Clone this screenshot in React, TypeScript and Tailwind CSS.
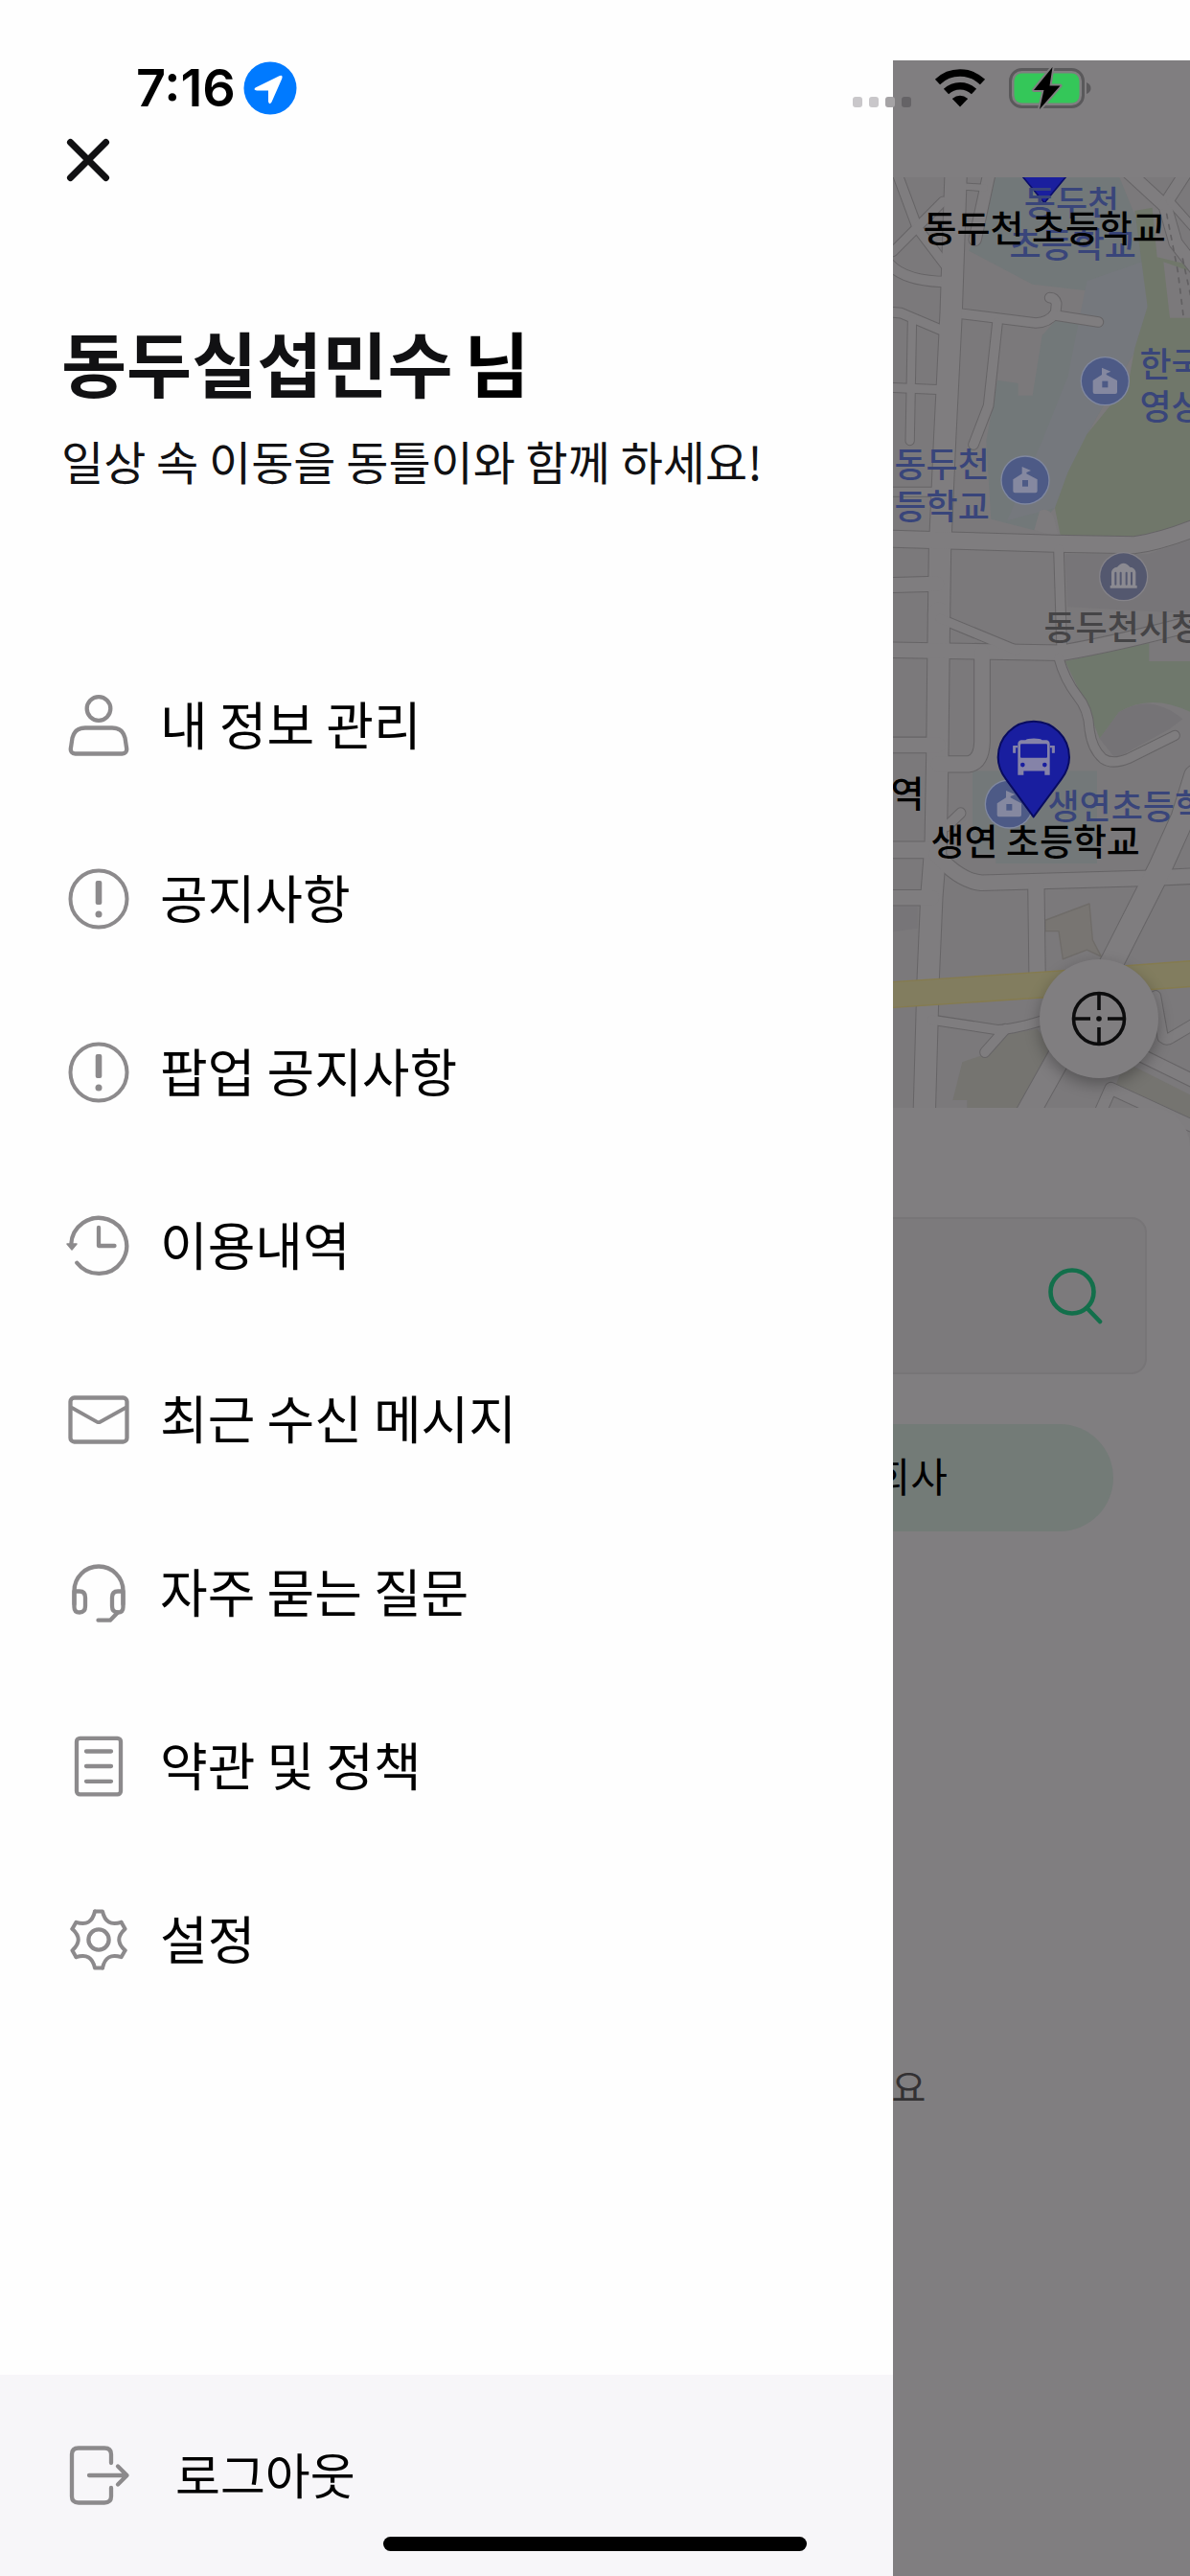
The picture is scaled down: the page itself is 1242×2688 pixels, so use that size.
import type { ReactNode } from 'react';
import { clsx } from 'clsx';

const iconProps = {
  viewBox: '0 0 64 64',
  fill: 'none',
  stroke: '#8c8a8c',
  strokeWidth: 4.3,
  strokeLinecap: 'round' as const,
  strokeLinejoin: 'round' as const,
  className: 'w-16 h-16 shrink-0 overflow-visible',
  'aria-hidden': true,
};

function UserIcon() {
  return (
    <svg {...iconProps}>
      <circle cx="32" cy="14.5" r="12.3" />
      <path d="M18 34.5H46C54 34.5 58 39 59.5 45L61 55C62 59.5 59.5 61.5 56.5 61.5H7.5C4.5 61.5 2 59.5 3 55L4.5 45C6 39 10 34.5 18 34.5Z" />
    </svg>
  );
}

function NoticeIcon() {
  return (
    <svg {...iconProps}>
      <circle cx="32" cy="32" r="29.5" strokeWidth="4" />
      <rect x="28.7" y="13" width="6.6" height="25" rx="2" fill="#8c8a8c" stroke="none" />
      <circle cx="32" cy="48" r="3.5" fill="#8c8a8c" stroke="none" />
    </svg>
  );
}

function HistoryIcon() {
  return (
    <svg {...iconProps}>
      <path d="M9.3 49.7A29 29 0 1 0 3.2 31" />
      <path d="M-1 30H9L4 36Z" fill="#8c8a8c" strokeWidth="1.5" />
      <path d="M32 13V32H48.5" />
    </svg>
  );
}

function MailIcon() {
  return (
    <svg {...iconProps}>
      <rect x="2.5" y="9.5" width="59" height="46" rx="4" />
      <path d="M4 20L30.5 34.8Q32 35.6 33.5 34.8L60 20" strokeWidth="3.8" />
    </svg>
  );
}

function HeadsetIcon() {
  return (
    <svg {...iconProps}>
      <path d="M6.5 44V30A25.5 25.5 0 0 1 57.5 30V44" />
      <path d="M6.5 30.5H12Q18 30.5 18 37V46Q18 52.5 12 52.5Q6.5 52.5 6.5 47Z" />
      <path d="M57.5 30.5H52Q46 30.5 46 37V46Q46 52.5 52 52.5Q57.5 52.5 57.5 47Z" />
      <path d="M52 52.5L44 60.7H31.5" />
    </svg>
  );
}

function DocumentIcon() {
  return (
    <svg {...iconProps}>
      <rect x="9" y="2.8" width="46" height="58.6" rx="3.5" />
      <path d="M19 16.5H45M19 32H45M19 47.8H45" />
    </svg>
  );
}

function GearIcon() {
  return (
    <svg {...iconProps} strokeWidth="4">
      <circle cx="32" cy="32" r="10.6" strokeWidth="4.3" />
      {[0, 60, 120, 180, 240, 300].map((angle) => (
        <path
          key={angle}
          d="M28 2.5H36C38.5 13.5 44.5 17.2 55.5 13.8"
          transform={`rotate(${angle} 32 32)`}
        />
      ))}
    </svg>
  );
}

function LogoutIcon() {
  return (
    <svg {...iconProps}>
      <path d="M45 19V10Q45 3.5 38 3.5H11Q4 3.5 4 10V54Q4 60.5 11 60.5H38Q45 60.5 45 54V45" />
      <path d="M22 32H61M52 22.5L61.5 32L52 41.5" />
    </svg>
  );
}

const menuItems = [
  { label: '내 정보 관리', icon: <UserIcon /> },
  { label: '공지사항', icon: <NoticeIcon /> },
  { label: '팝업 공지사항', icon: <NoticeIcon /> },
  { label: '이용내역', icon: <HistoryIcon /> },
  { label: '최근 수신 메시지', icon: <MailIcon /> },
  { label: '자주 묻는 질문', icon: <HeadsetIcon /> },
  { label: '약관 및 정책', icon: <DocumentIcon /> },
  { label: '설정', icon: <GearIcon /> },
];

function StatusBar() {
  return (
    <div className="absolute inset-x-0 top-[63px] z-10 h-[58px] pl-[142px] pr-[103px] flex items-center">
      <span className="font-['Inter',sans-serif] text-[54px] leading-[58px] font-semibold text-black">7:16</span>
      <svg viewBox="0 0 56 56" className="ml-2 w-14 h-14" aria-hidden="true">
        <circle cx="28" cy="28" r="27.5" fill="#007aff" />
        <path d="M12.5 27.5L37.5 15.2Q41.5 13.8 40.3 18L29.5 42.5Q27 46 26 42V30.5H14Q10 29.8 12.5 27.5Z" fill="#fff" />
      </svg>
      <div className="ml-auto flex gap-[7px] mt-7">
        <span className="w-[10px] h-[11px] rounded-[3px] bg-[#c9c7ca]" />
        <span className="w-[10px] h-[11px] rounded-[3px] bg-[#c9c7ca]" />
        <span className="w-[10px] h-[11px] rounded-[3px] bg-[#a5a3a5]" />
        <span className="w-[10px] h-[11px] rounded-[3px] bg-[#656366]" />
      </div>
      <svg viewBox="0 0 54 40" className="ml-6 w-[54px] h-10" aria-hidden="true">
        <path d="M3.5 13.5A34 34 0 0 1 50.5 13.5" fill="none" stroke="#000" strokeWidth="7.5" />
        <path d="M12.5 23.5A21 21 0 0 1 41.5 23.5" fill="none" stroke="#000" strokeWidth="7.5" />
        <path d="M27 39.5L18.8 31Q27 24.5 35.2 31Z" />
      </svg>
      <svg viewBox="0 0 86 44" className="ml-6 w-[86px] h-11" aria-hidden="true">
        <rect x="1.5" y="2.5" width="76" height="39" rx="12" fill="none" stroke="#5a595b" strokeWidth="3" />
        <rect x="5.5" y="6.5" width="68" height="31" rx="8" fill="#34c759" />
        <path d="M81 16Q85.5 18 85.5 22T81 28Z" fill="#5a595b" />
        <path d="M45.5 0L26 24H36.5L32 44L53.5 19.5H42.5Z" fill="#000" stroke="#807e80" strokeWidth="4" paintOrder="stroke" strokeLinejoin="round" />
      </svg>
    </div>
  );
}

const northRoads = [
  { d: 'M105 60L170 235L265 360', w: 32 },
  { d: 'M93 308L250 150', w: 30 },
  { d: 'M80 345Q130 402 265 402', w: 34 },
  { d: 'M80 496L118 500L260 560', w: 32 },
  { d: 'M153 520L146 900', w: 28 },
  { d: 'M80 733L250 740', w: 30 },
  { d: 'M80 1060L230 1060', w: 30 },
  { d: 'M395 60L350 270', w: 40 },
  { d: 'M290 102L380 108', w: 22 },
  { d: 'M290 500L540 531Q580 530 602 500L605 470Q600 452 584 452', w: 32 },
  { d: 'M596 506L736 528', w: 32 },
  { d: 'M420 530L392 790L345 912', w: 32 },
  { d: 'M820 50L945 165L978 280L1040 360', w: 42 },
  { d: 'M1010 60L945 160', w: 40 },
  { d: 'M960 150L1040 240', w: 26 },
  { d: 'M290 60L275 500L255 900L240 1240L237 1450', w: 70 },
  { d: 'M80 1206L240 1211L600 1222L850 1226Q930 1215 1040 1172', w: 54 },
  { d: 'M612 1240L622 1560', w: 32 },
  { d: 'M80 1352L230 1348', w: 48 },
];

const southRoads = [
  { d: 'M237 1440L235 1600L232 1870L227 2140L214 2300L203 2550L187 3100', w: 70 },
  { d: 'M80 1551L400 1556L620 1560Q800 1530 1040 1468', w: 48 },
  { d: 'M240 1456L480 1552', w: 30 },
  { d: 'M80 1839H235', w: 48 },
  { d: 'M80 2157H230', w: 52 },
  { d: 'M80 2302H215', w: 48 },
  { d: 'M235 1897H330Q370 1890 372 1830L372 1560', w: 50 },
  { d: 'M262 2085L305 2045', w: 32 },
  { d: 'M612 1575Q630 1640 670 1690Q705 1730 708 1790Q715 1850 750 1880Q780 1900 830 1880L976 1810', w: 30 },
  { d: 'M228 2170Q300 2250 370 2257L900 2242L1040 2236', w: 48 },
  { d: 'M1040 1935L1000 2060L930 2210L783 2490L500 2980', w: 74 },
  { d: 'M541 2260L545 2560', w: 52 },
  { d: 'M215 2672L420 2702Q480 2700 580 2668', w: 30 },
  { d: 'M445 2700L381 2770', w: 32 },
  { d: 'M915 2600L938 2725Q950 2735 965 2725L1040 2682', w: 34 },
  { d: 'M850 2770L1040 2860', w: 40 },
  { d: 'M720 3000L775 2880L1040 2998', w: 38 },
];

const southGrid = 'matrix(1 0 0 1.033 0 -47.5)';

function RoadLayer({ color, grow }: { color: string; grow: number }) {
  return (
    <g fill="none" stroke={color}>
      {northRoads.map((road) => (
        <path key={road.d} d={road.d} strokeWidth={road.w + grow} />
      ))}
      <g transform={southGrid}>
        {southRoads.map((road) => (
          <path key={road.d} d={road.d} strokeWidth={road.w + grow} />
        ))}
      </g>
    </g>
  );
}

function SchoolMarker({ x, y }: { x: number; y: number }) {
  return (
    <g transform={`translate(${x} ${y})`}>
      <circle r="77" fill="#8088a0" />
      <circle r="73" fill="#4d5a86" />
      <path d="M-38-2L-10-20V-42L18-30L4-24V-20L38-2V34Q38 40 32 40H-32Q-38 40-38 34Z" fill="#8588a0" />
      <rect x="-9" y="0" width="18" height="20" fill="#4d5a86" />
    </g>
  );
}

function MapDrawing() {
  return (
    <svg
      viewBox="93 75 933 3060"
      preserveAspectRatio="xMinYMin slice"
      className="absolute inset-0 w-full h-full"
      strokeLinecap="round"
      strokeLinejoin="round"
      aria-hidden="true"
    >
      <rect x="93" y="75" width="3000" height="3200" fill="#7b797b" />
      {/* campus, park and block areas */}
      <path d="M415 70H800L845 180L900 330L890 480L850 620L700 880L600 1110L535 1180L400 1145L385 900L420 710L485 720V758H530L560 570L605 520H700V430L530 410L330 305L350 270Z" fill="#727879" />
      <path d="M700 400L900 330L890 480L850 620L700 880L600 1110L450 1150L560 900L640 700Z" fill="#75787d" />
      <path d="M850 180L905 170L920 325L1026 350V1150Q930 1190 870 1200H618L600 1110L640 1000L700 880L830 720L850 610L890 480Z" fill="#70776a" />
      <path d="M940 340L1026 370V515H960Z" fill="#7b797b" />
      <path d="M535 1180L552 1120Q575 1105 595 1135L612 1200Z" fill="#7d7b7d" />
      <path d="M632 1255H890L1026 1210V1440L640 1420Z" fill="#777578" />
      <g transform={southGrid}>
        <path d="M632 1585L895 1530V1585H1026V1740Q900 1680 800 1740L740 1820L700 1720Z" fill="#6f786c" />
        <path d="M740 1820L800 1740Q900 1680 1000 1760L960 1790L790 1880Z" fill="#757376" />
        <path d="M342 1918H732V2198H415V2170H342Z" fill="#737879" />
        <path d="M93 2330H170V2395L93 2405Z" fill="#777578" />
        <path d="M570 2370L708 2320L718 2430L745 2480L700 2460L625 2488L612 2403H570Z" fill="#787572" stroke="#6f6c69" strokeWidth="4" />
        <path d="M310 2800L370 2780L450 2715L545 2700L590 2760L475 2988H325V2915H280Z" fill="#757470" />
        <path d="M820 2800L1026 2900V2975L790 2870Z" fill="#757470" />
      </g>

      <RoadLayer color="#666466" grow={3} />
      <RoadLayer color="#7f7d7f" grow={-3} />
      <path d="M950 190L985 370L1003 515M1000 330L1026 450" fill="none" stroke="#626062" strokeWidth="5" strokeDasharray="14 20" />

      <path d="M80 2635L600 2600L1040 2567" fill="none" stroke="#857b4e" strokeWidth="84" />
      <path d="M80 2635L600 2600L1040 2567" fill="none" stroke="#827d5f" strokeWidth="76" />

      <SchoolMarker x={757} y={713} />
      <SchoolMarker x={507} y={1023} />
      <SchoolMarker x={457} y={2037} />
      <g transform="translate(815 1325)">
        <circle r="77" fill="#858389" />
        <circle r="73" fill="#54586f" />
        <path d="M-38-14Q-36-28-20-30Q-10-42 0-42T20-30Q36-28 38-14V28H42V36H-42V28H-38Z" fill="#8b8a91" />
        <path d="M-25-12V24M-9-12V24M9-12V24M25-12V24" stroke="#54586f" strokeWidth="6" />
      </g>

      <path d="M480 50H654L567 155Z" fill="#1a1f9e" stroke="#0b0e6b" strokeWidth="5" />
      {/* bus stop pin */}
      <g transform={southGrid}>
        <path d="M533 2057L447 1943Q422 1910 422 1876A111 108 0 0 1 645 1876Q645 1910 620 1943Z" fill="#191e9f" stroke="#080b60" strokeWidth="6" />
        <g fill="#8583a8">
          <path d="M484 1836Q484 1826 494 1824H508Q512 1819 534 1819T560 1824H574Q584 1826 584 1836V1930H568V1918H502V1930H484Z" />
          <path d="M470 1842H482V1846H476V1862H470ZM598 1842H586V1846H592V1862H598Z" stroke="#8583a8" strokeWidth="3" />
        </g>
        <rect x="492" y="1836" width="84" height="42" rx="3" fill="#191e9f" />
        <circle cx="499" cy="1899" r="7" fill="#191e9f" />
        <circle cx="568" cy="1899" r="7" fill="#191e9f" />
      </g>
    </svg>
  );
}

function MapLabel({ className, children }: { className: string; children: ReactNode }) {
  return <span className={clsx('absolute whitespace-nowrap leading-[44px] font-medium', className)}>{children}</span>;
}

function MapView() {
  return (
    <div className="relative h-[971px]">
      <div className="absolute inset-x-0 top-0 h-[1020px] overflow-hidden">
        <MapDrawing />
        <MapLabel className="left-[122px] top-[2px] w-[130px] text-center text-[36px] text-[#39457a]">
          동두천
          <br />
          초등학교
        </MapLabel>
        <MapLabel className="left-[32px] top-[29px] text-[38px] text-black">동두천 초등학교</MapLabel>
        <MapLabel className="left-[258px] top-[171px] text-[36px] text-[#39457a]">
          한국
          <br />
          영상
        </MapLabel>
        <MapLabel className="left-0.5 top-[275px] text-[36px] text-[#39457a]">
          동두천
          <br />
          등학교
        </MapLabel>
        <MapLabel className="left-[158px] top-[445px] text-[36px] text-[#454446]">동두천시청</MapLabel>
        <MapLabel className="left-[162px] top-[632px] text-[36px] text-[#39457a]">생연초등학교</MapLabel>
        <MapLabel className="left-[40px] top-[669px] text-[38px] text-black">생연 초등학교</MapLabel>
        <MapLabel className="-left-0.5 top-[619px] text-[38px] text-black">역</MapLabel>
      </div>
      <button
        type="button"
        aria-label="현재 위치"
        className="absolute right-[33px] bottom-[31px] w-[124px] h-[124px] rounded-full bg-[#807e80] shadow-[0_6px_16px_rgba(0,0,0,0.3)] flex items-center justify-center"
      >
        <svg viewBox="0 0 58 58" className="w-[58px] h-[58px]" fill="none" stroke="#0c0c0d" strokeWidth="3.6">
          <circle cx="29" cy="29" r="26.5" />
          <path d="M29 2V20M29 38V56M2 29H20M38 29H56" />
          <circle cx="29" cy="29" r="2.8" fill="#0c0c0d" stroke="none" />
        </svg>
      </button>
    </div>
  );
}

function HomeScreen() {
  return (
    <main className="flex-1 min-w-0 mt-[63px] pt-[122px] bg-[#807e80] overflow-hidden flex flex-col">
      <MapView />
      <section className="relative flex-1 rounded-tr-[40px] bg-[#807e80] pt-[114px]">
        <div className="mr-[45px] h-[164px] rounded-r-[16px] border-2 border-l-0 border-[#777577] bg-[#7c7a7c] flex items-center">
          <input type="text" aria-label="검색" className="flex-1 min-w-0 h-full bg-transparent outline-none text-[42px]" />
          <button type="button" aria-label="검색하기" className="mr-11">
            <svg viewBox="0 0 58 60" className="w-[58px] h-[60px]" fill="none" stroke="#136f4b" strokeWidth="4.6" strokeLinecap="round">
              <circle cx="26" cy="26" r="22.5" />
              <path d="M41.5 43L55 57" />
            </svg>
          </button>
        </div>
        <button
          type="button"
          className="mt-[52px] -ml-5 pb-2 w-[250px] h-[112px] rounded-r-full bg-[#737b77] text-left text-[42px] text-black"
        >
          회사
        </button>
        <p className="mt-[550px] -ml-px text-[39px] leading-[56px] text-[#333133]">요</p>
      </section>
    </main>
  );
}

function Drawer() {
  return (
    <aside className="w-3/4 bg-[#fefefe] flex flex-col pt-[139px]">
      <button type="button" aria-label="닫기" className="ml-16 w-14 h-14">
        <svg viewBox="0 0 56 56" className="w-14 h-14" stroke="#111113" strokeWidth="7" strokeLinecap="round">
          <path d="M9.5 9.5L46.5 46.5M46.5 9.5L9.5 46.5" />
        </svg>
      </button>
      <h1 className="mt-[138px] ml-16 flex gap-3 text-[74px] leading-[88px] font-bold text-[#111113]">
        동두실섭민수 <span className="text-black">님</span>
      </h1>
      <p className="mt-[27px] ml-16 text-[48px] leading-[64px] text-[#111113]">일상 속 이동을 동틀이와 함께 하세요!</p>
      <nav className="mt-[154px]">
        <ul>
          {menuItems.map((item) => (
            <li key={item.label}>
              <a href="#" className="h-[181px] pl-[71px] flex items-center gap-8 text-[54px] leading-[80px] text-black">
                {item.icon}
                <span className="pb-1">{item.label}</span>
              </a>
            </li>
          ))}
        </ul>
      </nav>
      <button
        type="button"
        className="mt-auto h-[210px] pl-[71px] flex items-center gap-12 bg-[#f7f6f9] text-[51px] leading-[80px] text-black"
      >
        <LogoutIcon />
        <span className="pb-1">로그아웃</span>
      </button>
    </aside>
  );
}

export default function App() {
  return (
    <div className="relative min-h-screen flex bg-[#fefefe] font-['Noto_Sans_CJK_KR',sans-serif]">
      <StatusBar />
      <Drawer />
      <HomeScreen />
      <div className="absolute left-1/2 bottom-[26px] -translate-x-1/2 w-[442px] h-[15px] rounded-full bg-black" />
    </div>
  );
}
